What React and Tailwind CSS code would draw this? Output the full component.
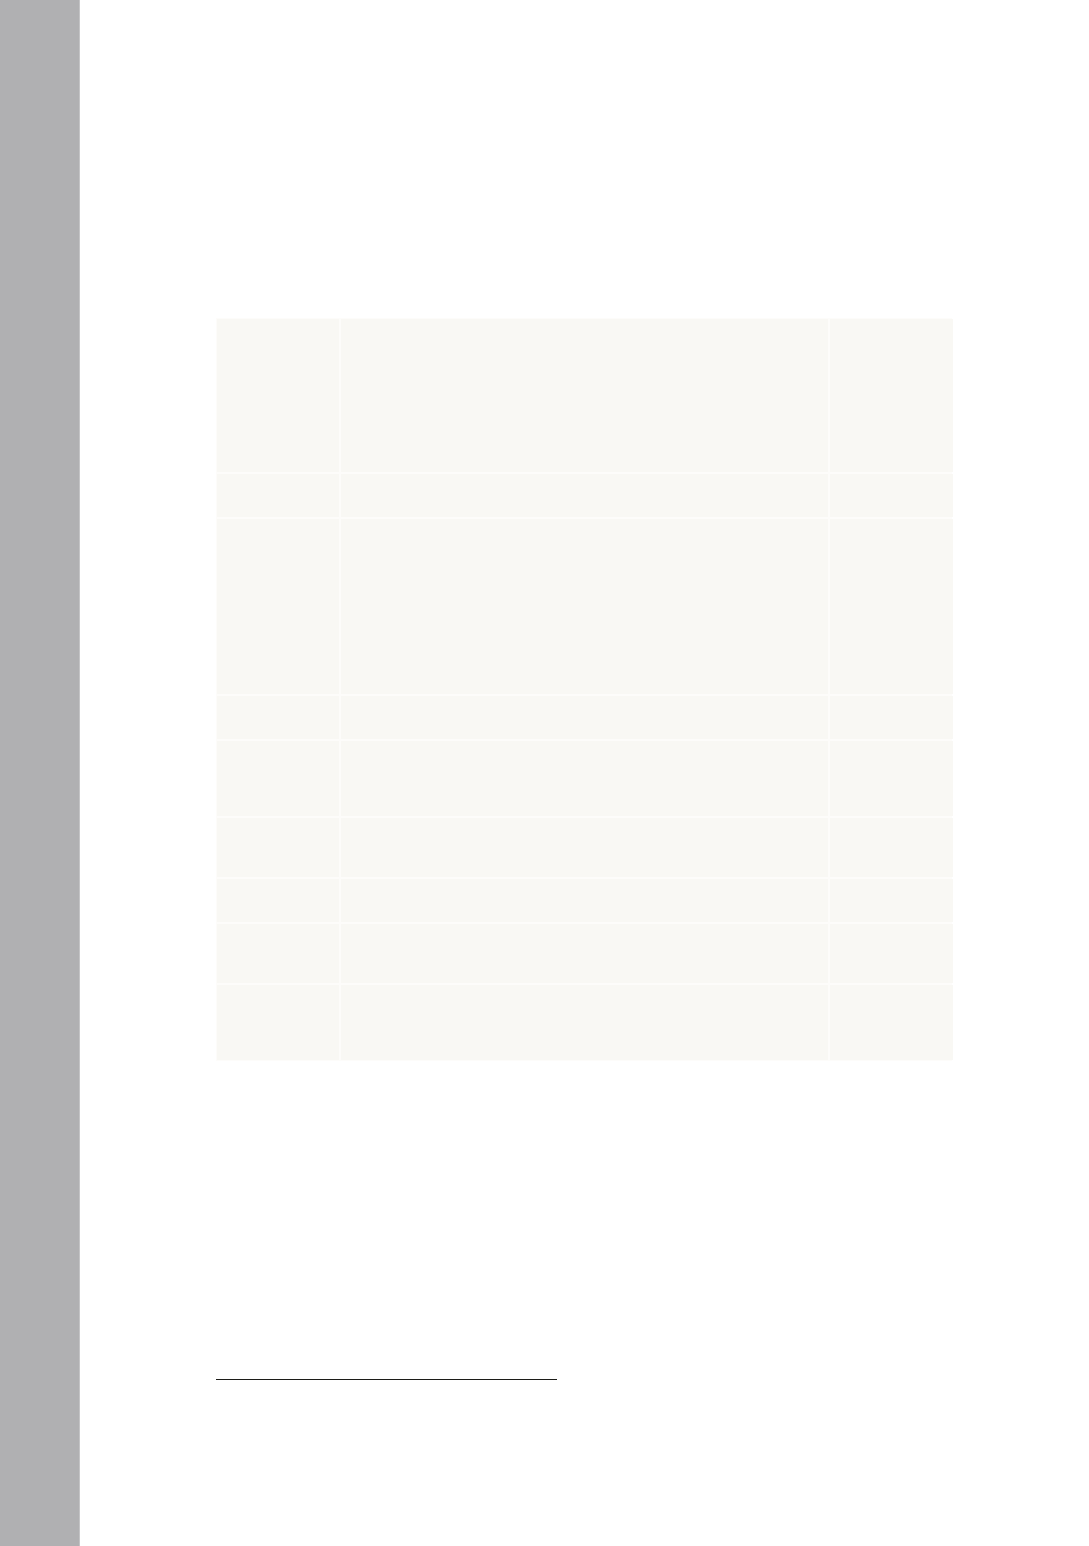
export default function App() {
  const rows = [155, 45, 177, 45, 77, 61, 45, 61, 77];
  return (
    <div className="flex h-[1546px] w-[1089px] bg-white" style={{ fontFamily: '"Liberation Sans", Arial, sans-serif' }}>
      <div className="h-full w-[80px] shrink-0 border-r border-[#c4c4c6] bg-[#b0b0b2]" />
      <div className="flex flex-1 flex-col pl-[136px] pt-[318px]">
        <div className="w-[736px] bg-[#fdfcfa] p-px">
          <div className="grid grid-cols-[122px_487px_123px] gap-[2px]">
            {rows.map((h, i) => (
              <div key={i} className="contents">
                <div className="bg-[#f9f8f4]" style={{ height: h - 2 }} />
                <div className="bg-[#f9f8f4]" style={{ height: h - 2 }} />
                <div className="bg-[#f9f8f4]" style={{ height: h - 2 }} />
              </div>
            ))}
          </div>
        </div>
        <div className="mt-[318px] h-px w-[341px] bg-[#1c1c18]" />
      </div>
    </div>
  );
}
